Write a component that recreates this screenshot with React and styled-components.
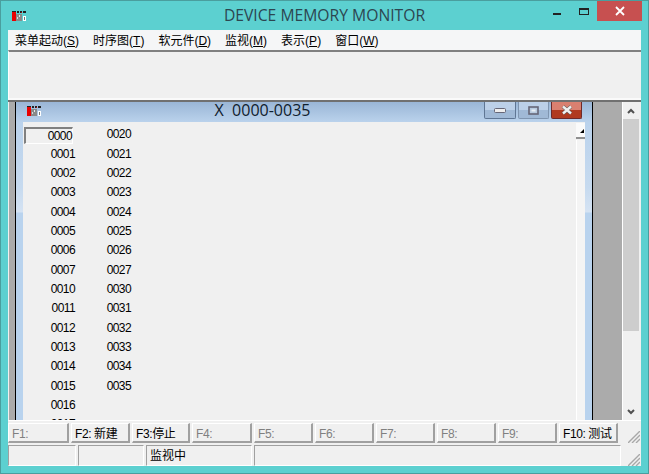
import styled, { createGlobalStyle } from "styled-components";

const GlobalStyle = createGlobalStyle`
  html, body { margin: 0; padding: 0; background: #5cd0d0; }
  body { font-family: "Liberation Sans", "Noto Sans CJK SC", sans-serif; }
`;

const Frame = styled.div`
  width: 649px;
  height: 474px;
  box-sizing: border-box;
  border: 1px solid #4a9e9e;
  background: #5cd0d0;
  display: flex;
  flex-direction: column;
  overflow: hidden;
`;

const Caption = styled.div`
  height: 29px;
  flex: none;
  display: flex;
  align-items: flex-start;
  padding-left: 11px;
`;

const LogoSlot = styled.div`
  padding-top: ${(p) => p.$top}px;
  flex: none;
`;

const CaptionTitle = styled.div`
  flex: 1;
  text-align: center;
  padding: 4px 0 0 79px;
  font-family: "Open Sans", sans-serif;
  font-size: 15.7px;
  line-height: 21px;
  color: #2c4650;
`;

const SysButtons = styled.div`
  display: flex;
  align-items: flex-start;
  padding-right: 6px;
`;

const SysButton = styled.div`
  width: ${(p) => p.$w}px;
  height: 20px;
  display: flex;
  align-items: center;
  justify-content: center;
  background: ${(p) => p.$bg || "transparent"};
`;

const Client = styled.div`
  flex: 1;
  margin: 0 7px 7px 7px;
  background: #f0f0f0;
  display: flex;
  flex-direction: column;
  min-height: 0;
`;

const MenuBar = styled.div`
  height: 20px;
  flex: none;
  box-sizing: border-box;
  padding: 0 0 2px 7px;
  background: #f5f6f7;
  display: flex;
  gap: 14px;
  align-items: center;
  font-size: 12px;
  color: #000;
`;

const Toolbar = styled.div`
  height: 50px;
  flex: none;
  box-sizing: border-box;
  border-top: 2px solid;
  border-top-color: #808080;
  border-bottom: 2px solid #fafafa;
  border-left: 1px solid #fff;
  background: #f0f0f0;
`;

const Mdi = styled.div`
  flex: 1;
  min-height: 0;
  display: flex;
  border-top: 2px solid #707070;
  overflow: hidden;
`;

const LeftGutter = styled.div`
  width: 6px;
  flex: none;
  background: #ababab;
  margin-left: 1px;
  border-right: 1px solid #000;
`;

const RightGutter = styled.div`
  width: 29px;
  flex: none;
  background: #ababab;
  border-left: 1px solid #000;
`;

const Child = styled.div`
  flex: 1;
  display: flex;
  flex-direction: column;
  background: linear-gradient(#bad2ec 20px, #c6daef 85px, #d5e3f3 110px, #b9d3ee 111px);
  min-width: 0;
`;

const ChildCaption = styled.div`
  height: 20px;
  flex: none;
  display: flex;
  align-items: flex-start;
  padding-left: 11px;
  background: linear-gradient(#9ab6d6, #bad2ec);
`;

const ChildTitle = styled.div`
  flex: 1;
  text-align: center;
  font-size: 16px;
  line-height: 16px;
  font-family: "Open Sans", sans-serif;
  color: #10202c;
`;

const ChildButtons = styled.div`
  display: flex;
  gap: 2px;
  padding-right: 10px;
`;

const ChildButton = styled.div`
  width: ${(p) => p.$w || 31}px;
  height: 17px;
  box-sizing: border-box;
  border: 1px solid ${(p) => p.$border || "#7f95b0"};
  border-top: none;
  border-radius: 0 0 2px 2px;
  background: ${(p) => p.$bg || "linear-gradient(#bcd0e8 50%, #a0b9d6 50%)"};
  display: flex;
  align-items: center;
  justify-content: center;
`;

const ChildBody = styled.div`
  flex: 1;
  display: flex;
  margin: 0 7px;
  background: #f0f0f0;
  min-height: 0;
`;

const Grid = styled.div`
  flex: 1;
  display: grid;
  grid-template-columns: 52px 56px;
  grid-auto-flow: column;
  grid-template-rows: repeat(16, 19.33px);
  align-content: start;
  justify-content: start;
  padding-top: 3.3px;
  font-size: 12px;
  letter-spacing: -0.6px;
  color: #000;
`;

const Cell = styled.div`
  height: 19.33px;
  line-height: 19.33px;
  text-align: right;
`;

const SelectedCell = styled.div`
  margin: 2px 0 0 1px;
  width: 49px;
  height: 17px;
  box-sizing: border-box;
  border: 2px solid;
  border-color: #808080 #fff #fff #808080;
  border-right-width: 1px;
  border-bottom-width: 1px;
  text-align: right;
  line-height: 15px;
`;

const InnerScroll = styled.div`
  width: 9px;
  flex: none;
  padding-top: 1px;
  display: flex;
  flex-direction: column;
`;

const InnerArrow = styled.div`
  height: 14px;
  flex: none;
  background: #fafafa;
  border-bottom: 2px solid #909090;
  display: flex;
  justify-content: flex-end;
  align-items: center;
`;

const InnerTrack = styled.div`
  flex: 1;
  border-left: 1px solid #fff;
  background: #f4f4f4;
  margin-top: 1px;
`;

const ScrollBar = styled.div`
  width: 17px;
  flex: none;
  box-sizing: border-box;
  border-left: 1px solid #fff;
  margin-right: 2px;
  background: #f0f0f0;
  display: flex;
  flex-direction: column;
`;

const ScrollBtn = styled.div`
  height: 17px;
  flex: none;
  display: flex;
  align-items: center;
  justify-content: center;
`;

const ScrollTrack = styled.div`
  flex: 1;
`;

const Thumb = styled.div`
  height: 212px;
  background: #cdcdcd;
`;

const KeyRow = styled.div`
  height: 25px;
  flex: none;
  display: flex;
  box-sizing: border-box;
  padding-top: 2px;
  gap: 2px;
  border-top: 1px solid #fff;
  position: relative;
`;

const KeyButton = styled.div`
  width: ${(p) => p.$w}px;
  height: 20px;
  box-sizing: border-box;
  border: 1px solid;
  border-color: #fff #a0a0a0 #a0a0a0 #fff;
  border-right-width: 2px;
  border-bottom-width: 2px;
  font-size: 12px;
  letter-spacing: -0.4px;
  line-height: 20px;
  padding-left: 3px;
  white-space: nowrap;
  color: ${(p) => (p.$on ? "#000" : "#808080")};
`;

const Status = styled.div`
  height: 21px;
  flex: none;
  display: flex;
  gap: 2px;
  position: relative;
`;

const StatusPane = styled.div`
  width: ${(p) => p.$w}px;
  flex: none;
  box-sizing: border-box;
  border-top: 1px solid #a0a0a0;
  border-left: 1px solid #a0a0a0;
  border-right: 1px solid #fff;
  border-bottom: 1px solid #fff;
  font-size: 12px;
  line-height: 20px;
  padding-left: 3px;
`;

const Grip = styled.svg`
  width: 12px;
  height: 12px;
  position: absolute;
  right: 1px;
  bottom: ${(p) => p.$bottom}px;
`;

const Logo = () => (
  <svg width="14" height="10" viewBox="0 0 14 10" style={{ display: "block" }}>
    <rect x="0" y="1" width="4" height="9" fill="#ea0000" />
    <rect x="4" y="3" width="6" height="7" fill="#8a8a8a" />
    <rect x="7" y="4" width="1" height="2" fill="#e8e8e8" />
    <rect x="5" y="6" width="1" height="2" fill="#d8d8d8" />
    <rect x="11" y="5" width="3" height="5" fill="#fff" />
    <rect x="12" y="6" width="1" height="3" fill="#777" />
    <path d="M0 0H4V1H0ZM5 0H7V2H5ZM8 0H10V2H8ZM11 0H14V2H11Z" fill="#222" />
    <rect x="9" y="1" width="1" height="1" fill="#c00000" />
  </svg>
);

const GripIcon = ({ bottom }) => (
  <Grip viewBox="0 0 12 12" $bottom={bottom}>
    <path d="M12 0L0 12M12 4L4 12M12 8L8 12" stroke="#a8a8a8" strokeWidth="1.4" />
  </Grip>
);

const col1 = ["0001", "0002", "0003", "0004", "0005", "0006", "0007", "0010", "0011", "0012", "0013", "0014", "0015", "0016", "0017"];
const col2 = ["0020", "0021", "0022", "0023", "0024", "0025", "0026", "0027", "0030", "0031", "0032", "0033", "0034", "0035"];
const menus = [["菜单起动", "S"], ["时序图", "T"], ["软元件", "D"], ["监视", "M"], ["表示", "P"], ["窗口", "W"]];
const keys = [
  ["F1:", false, 61],
  ["F2: 新建", true, 59],
  ["F3:停止", true, 58],
  ["F4:", false, 60],
  ["F5:", false, 59],
  ["F6:", false, 59],
  ["F7:", false, 59],
  ["F8:", false, 59],
  ["F9:", false, 59],
  ["F10: 测试", true, 59],
];

export default function App() {
  return (
    <Frame>
      <GlobalStyle />
      <Caption>
        <LogoSlot $top={10}><Logo /></LogoSlot>
        <CaptionTitle>DEVICE MEMORY MONITOR</CaptionTitle>
        <SysButtons>
          <SysButton $w={26}>
            <svg width="10" height="10"><rect x="1" y="7" width="8" height="2" fill="#222" /></svg>
          </SysButton>
          <SysButton $w={27}>
            <svg width="10" height="10"><rect x=".5" y="2.5" width="9" height="6" fill="none" stroke="#222" /><rect y="2" width="10" height="2" fill="#222" /></svg>
          </SysButton>
          <SysButton $w={45} $bg="#c75050">
            <svg width="10" height="10"><path d="M1 1L9 9M9 1L1 9" stroke="#fff" strokeWidth="1.8" /></svg>
          </SysButton>
        </SysButtons>
      </Caption>
      <Client>
        <MenuBar>
          {menus.map(([name, key]) => (
            <span key={key}>{name}(<u>{key}</u>)</span>
          ))}
        </MenuBar>
        <Toolbar />
        <Mdi>
          <LeftGutter />
          <Child>
            <ChildCaption>
              <LogoSlot $top={4}><Logo /></LogoSlot>
              <ChildTitle>X&nbsp;&nbsp;0000-0035</ChildTitle>
              <ChildButtons>
                <ChildButton $w={32} $border="#5f7694">
                  <svg width="12" height="5"><rect x=".5" y=".5" width="11" height="4" rx="1" fill="#eee" stroke="#667" /></svg>
                </ChildButton>
                <ChildButton>
                  <svg width="11" height="9"><rect x="1" y="1" width="9" height="7" fill="#b8cadf" stroke="#667" strokeWidth="1.6" /><rect x="3.5" y="3.5" width="4" height="2" fill="#e8eef4" /></svg>
                </ChildButton>
                <ChildButton $bg="linear-gradient(#d98070 50%, #b03a20 50%)" $border="#6e2a2a">
                  <svg width="14" height="10"><path d="M3 1.5L11 8.5M11 1.5L3 8.5" stroke="#555" strokeWidth="3.6" /><path d="M3 1.5L11 8.5M11 1.5L3 8.5" stroke="#f0f0f0" strokeWidth="2.4" /></svg>
                </ChildButton>
              </ChildButtons>
            </ChildCaption>
            <ChildBody>
              <Grid>
                <SelectedCell>0000</SelectedCell>
                {col1.map((c) => <Cell key={c}>{c}</Cell>)}
                {col2.map((c) => <Cell key={c}>{c}</Cell>)}
              </Grid>
              <InnerScroll>
                <InnerArrow>
                  <svg width="5" height="5"><path d="M0 5L4 1V5Z" fill="#000" /></svg>
                </InnerArrow>
                <InnerTrack />
              </InnerScroll>
            </ChildBody>
          </Child>
          <RightGutter />
          <ScrollBar>
            <ScrollBtn>
              <svg width="8" height="6"><path d="M1 5L4 2L7 5" fill="none" stroke="#505050" strokeWidth="2" /></svg>
            </ScrollBtn>
            <ScrollTrack><Thumb /></ScrollTrack>
            <ScrollBtn>
              <svg width="8" height="6"><path d="M1 1L4 4L7 1" fill="none" stroke="#505050" strokeWidth="2" /></svg>
            </ScrollBtn>
          </ScrollBar>
        </Mdi>
        <KeyRow>
          {keys.map(([label, on, w]) => (
            <KeyButton key={label} $on={on} $w={w}>{label}</KeyButton>
          ))}
          <GripIcon bottom={2} />
        </KeyRow>
        <Status>
          <StatusPane $w={68} />
          <StatusPane $w={66} />
          <StatusPane $w={106}>监视中</StatusPane>
          <StatusPane $w={367} />
          <GripIcon bottom={0} />
        </Status>
      </Client>
    </Frame>
  );
}
